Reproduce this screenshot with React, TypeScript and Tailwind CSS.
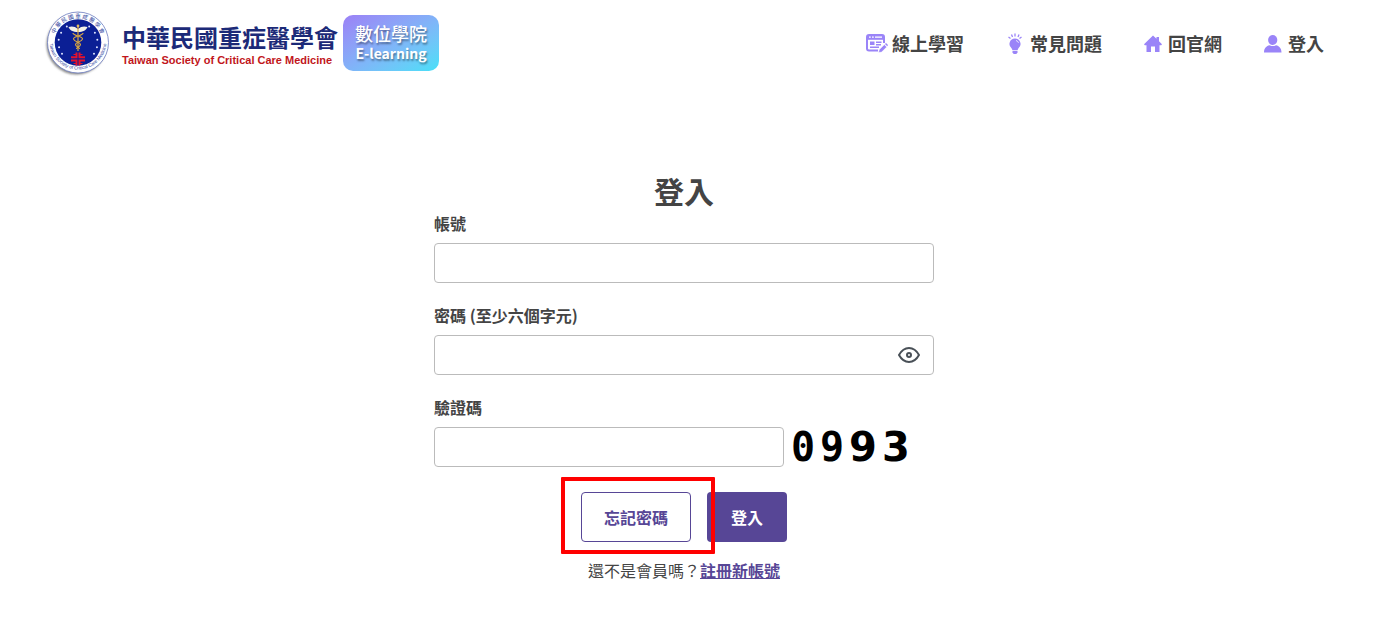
import { useState } from "react";
import type { ReactNode } from "react";

function Emblem() {
  const stars = [-150, -172, 166, 145, -125, -55, -30, -8, 14, 35];
  return (
    <svg viewBox="0 1 66 68" className="h-[68px] w-[66px] shrink-0" aria-hidden="true">
      <defs>
        <path id="ring-top" d="M 10.5 33.500 A 24.5 24.5 0 0 1 59.5 33.500" />
        <path id="ring-bottom" d="M 6.500 32 A 28.500 28.500 0 0 0 63.500 32" />
        <filter id="soft" x="-20%" y="-20%" width="140%" height="140%">
          <feGaussianBlur stdDeviation="1.2" />
        </filter>
      </defs>
      <circle cx="33.5" cy="35.5" r="30" fill="#888" filter="url(#soft)" />
      <circle cx="35" cy="33.5" r="30.5" fill="#fff" stroke="#6a7abf" strokeWidth="0.8" />
      <circle cx="35" cy="33.5" r="23.3" fill="#0b1f95" />
      <text fontFamily="'Noto Sans CJK TC', sans-serif" fontSize="5.5" fill="#2c3d9c">
        <textPath href="#ring-top" startOffset="50%" textAnchor="middle">中 華 民 國 重 症 醫 學 會</textPath>
      </text>
      <text fontFamily="'Liberation Sans', sans-serif" fontSize="4.7" fill="#2c3d9c">
        <textPath href="#ring-bottom" startOffset="50%" textAnchor="middle">Taiwan Society of Critical Care Medicine</textPath>
      </text>
      {stars.map((deg) => (
        <circle
          key={deg}
          cx={35 + 19.5 * Math.cos((deg * Math.PI) / 180)}
          cy={33.5 + 19.5 * Math.sin((deg * Math.PI) / 180)}
          r="1"
          fill="#dfe5ff"
        />
      ))}
      <path d="M35 20C32 17 28 17 25.500 18C26.500 21 30 23 35 23C40 23 43.500 21 44.500 18C42 17 38 17 35 20Z" fill="#f3f1e6" />
      <circle cx="35" cy="17" r="1.4" fill="#e2bd62" />
      <path d="M35 18V42" stroke="#d9a640" strokeWidth="1.2" />
      <path d="M30 24C30 27 40 27 39.500 30C39 33 32.500 33 32.500 35.500C32.500 38 36.500 38 36.500 40M40 24C40 27 30 27 30.500 30C31 33 37.500 33 37.500 35.500C37.500 38 33.500 38 33.500 40" fill="none" stroke="#d9a640" strokeWidth="1.2" />
      <path d="M33.500 43.500V48.300H28M36.500 43.500V48.300H42M33.500 56.500V51.500H28M36.500 56.500V51.500H42" fill="none" stroke="#e3122d" strokeWidth="2" />
      <path d="M30.500 45.500H33M37 45.500H39.500M30.500 54.500H33M37 54.500H39.500" stroke="#e3122d" strokeWidth="1.200" />
    </svg>
  );
}

function CourseIcon() {
  return (
    <svg viewBox="0 0 22 20" className="mr-1 h-5 w-[22px]" aria-hidden="true">
      <path d="M18 9V3Q18 1 16 1H3Q1 1 1 3V14.500Q1 16.500 3 16.500H12" fill="none" stroke="#9a84f8" strokeWidth="2" />
      <path d="M1 1H18V5.800H1Z" fill="#9a84f8" />
      <path d="M3 3.200H4.800M6 3.200H7.800M9 3.200H16" stroke="#fff" strokeWidth="1.300" />
      <path d="M4 7.500H8.500V11H4ZM10 7.500H15.500V9H10ZM10 10H15V11.400H10ZM4 12.500H13V14H4Z" fill="#9a84f8" />
      <path d="M12.500 18.800L13.200 15.600L18.300 10.500L20.800 13L15.700 18.100Z" fill="#9a84f8" stroke="#fff" strokeWidth="0.700" />
      <path d="M19 10L20 9L22 11L21.200 12.200Z" fill="#9a84f8" />
    </svg>
  );
}

function BulbIcon() {
  return (
    <svg viewBox="0 0 18 22" className="mr-1.5 h-[22px] w-[18px]" aria-hidden="true">
      <path d="M9 0.500V3.500M5.500 1.500L6.500 4M13 1.500L12 4M2.500 4L4.500 5.500M15.500 4L13.500 5.500" stroke="#9a84f8" strokeWidth="1.300" />
      <path d="M9 5.500A5.500 5.500 0 0 0 5.700 15.400L6.500 17.300H11.500L12.300 15.400A5.500 5.500 0 0 0 9 5.500Z" fill="#9a84f8" />
      <path d="M10 7.500A3.600 3.600 0 0 1 12.500 9.800" fill="none" stroke="#fff" strokeWidth="0.800" />
      <path d="M6.500 17.900H11.500V19.500L10.300 21H7.700L6.500 19.500Z" fill="#9a84f8" />
    </svg>
  );
}

function HomeIcon() {
  return (
    <svg viewBox="0 0 18 18" className="mr-1.5 size-[18px]" aria-hidden="true">
      <path d="M9 0.500L12.500 3.800V2H15V6.200L18 9.200L17.200 10.200H15.500V17H11V11.500H7V17H2.500V10.200H0.800L0 9.200Z" fill="#9a84f8" />
    </svg>
  );
}

function UserIcon() {
  return (
    <svg viewBox="0 0 18 18" className="mr-1.5 size-[18px]" aria-hidden="true">
      <ellipse cx="8.700" cy="5" rx="4.600" ry="5" fill="#9a84f8" />
      <path d="M0 17.500C0 12.800 2.500 11 5.500 10.200Q8.700 12 12 10.200C15 11 17.500 12.800 17.500 17.500Z" fill="#9a84f8" />
    </svg>
  );
}

function NavLink({ icon, children }: { icon: ReactNode; children: ReactNode }) {
  return (
    <a href="#" className="flex items-center text-lg font-bold">
      {icon}
      <span className="pb-0.5">{children}</span>
    </a>
  );
}

function Captcha() {
  return (
    <svg viewBox="0 0 124 48" className="-my-1 h-12 w-[124px]" role="img" aria-label="0993" fontSize="40" fontWeight="700" fill="#000">
      <g fontFamily="'DejaVu Sans Mono', monospace">
        <text x="1" y="38">0</text>
        <text x="30" y="38">9</text>
      </g>
      <g fontFamily="'DejaVu Sans', sans-serif">
        <text x="59" y="38">9</text>
        <text x="92" y="38">3</text>
      </g>
    </svg>
  );
}

const inputClass = "h-10 w-full rounded border border-[#bbb] bg-white px-3 outline-none";
const labelClass = "mb-[9px] block leading-[22px] font-bold";

export default function App() {
  const [visible, setVisible] = useState(false);
  return (
    <div className="min-h-screen bg-white pr-[19px] font-['Noto_Sans_CJK_TC',sans-serif] text-base leading-6 text-[#444]">
      <header className="flex h-[88px] items-center justify-between pr-11 pl-[43px]">
        <a href="#" className="flex items-center">
          <Emblem />
          <span className="ml-[13px] flex flex-col pt-1">
            <span className="text-2xl leading-7 font-bold text-[#1c2a78]">中華民國重症醫學會</span>
            <span className="font-['Liberation_Sans',sans-serif] text-[11px] leading-[18px] font-bold text-[#c1161c]">
              Taiwan Society of Critical Care Medicine
            </span>
          </span>
          <span className="mb-0.5 ml-[5px] flex h-14 w-24 flex-col items-center justify-center rounded-[10px] bg-linear-to-br from-[#9b80f6] to-[#43e0f8] text-white text-shadow-[1px_2px_2px_rgb(0_0_0/0.4)]">
            <span className="text-lg leading-5 font-medium">數位學院</span>
            <span className="text-sm leading-5 font-bold">E-learning</span>
          </span>
        </a>
        <nav className="flex items-center gap-[42px]">
          <NavLink icon={<CourseIcon />}>線上學習</NavLink>
          <NavLink icon={<BulbIcon />}>常見問題</NavLink>
          <NavLink icon={<HomeIcon />}>回官網</NavLink>
          <NavLink icon={<UserIcon />}>登入</NavLink>
        </nav>
      </header>

      <main className="mx-auto max-w-[500px] pt-[84px]">
        <h1 className="mb-1 text-center text-3xl leading-9 font-bold">登入</h1>
        <form onSubmit={(e) => e.preventDefault()}>
          <div className="flex flex-col gap-[21px]">
            <div>
              <label htmlFor="account" className={labelClass}>帳號</label>
              <input id="account" type="text" className={inputClass} />
            </div>
            <div>
              <label htmlFor="password" className={labelClass}>密碼 (至少六個字元)</label>
              <div className="relative">
                <input id="password" type={visible ? "text" : "password"} className={inputClass} />
                <button
                  type="button"
                  aria-label="顯示密碼"
                  onClick={() => setVisible(!visible)}
                  className="absolute inset-y-0 right-3 flex items-center"
                >
                  <svg viewBox="0 0 26 20" className="h-5 w-[26px]" fill="none" stroke="#495057" strokeWidth="2" aria-hidden="true">
                    <path d="M3 10C5.500 5.500 8.500 3 13 3S20.500 5.500 23 10C20.500 14.500 17.500 17 13 17S5.500 14.500 3 10Z" strokeLinejoin="round" />
                    <circle cx="13" cy="10" r="2" />
                  </svg>
                </button>
              </div>
            </div>
            <div>
              <label htmlFor="captcha" className={labelClass}>驗證碼</label>
              <div className="flex items-center gap-1.5">
                <div className="w-[70%]">
                  <input id="captcha" type="text" className={inputClass} />
                </div>
                <Captcha />
              </div>
            </div>
          </div>
          <div className="mt-[25px] flex justify-center gap-4">
            <div className="relative">
              <button type="button" className="h-[50px] w-[110px] rounded border border-[#574696] font-bold text-[#574696]">
                忘記密碼
              </button>
              <span className="pointer-events-none absolute -top-[15px] -right-6 -bottom-3 -left-5 z-10 rounded-[1px] border-4 border-[#ff0000]" />
            </div>
            <button type="submit" className="h-[50px] w-20 rounded bg-[#574696] font-bold text-white">登入</button>
          </div>
        </form>
        <p className="mt-4 text-center">
          還不是會員嗎？<a href="#" className="font-bold text-[#574696] underline">註冊新帳號</a>
        </p>
      </main>
    </div>
  );
}
